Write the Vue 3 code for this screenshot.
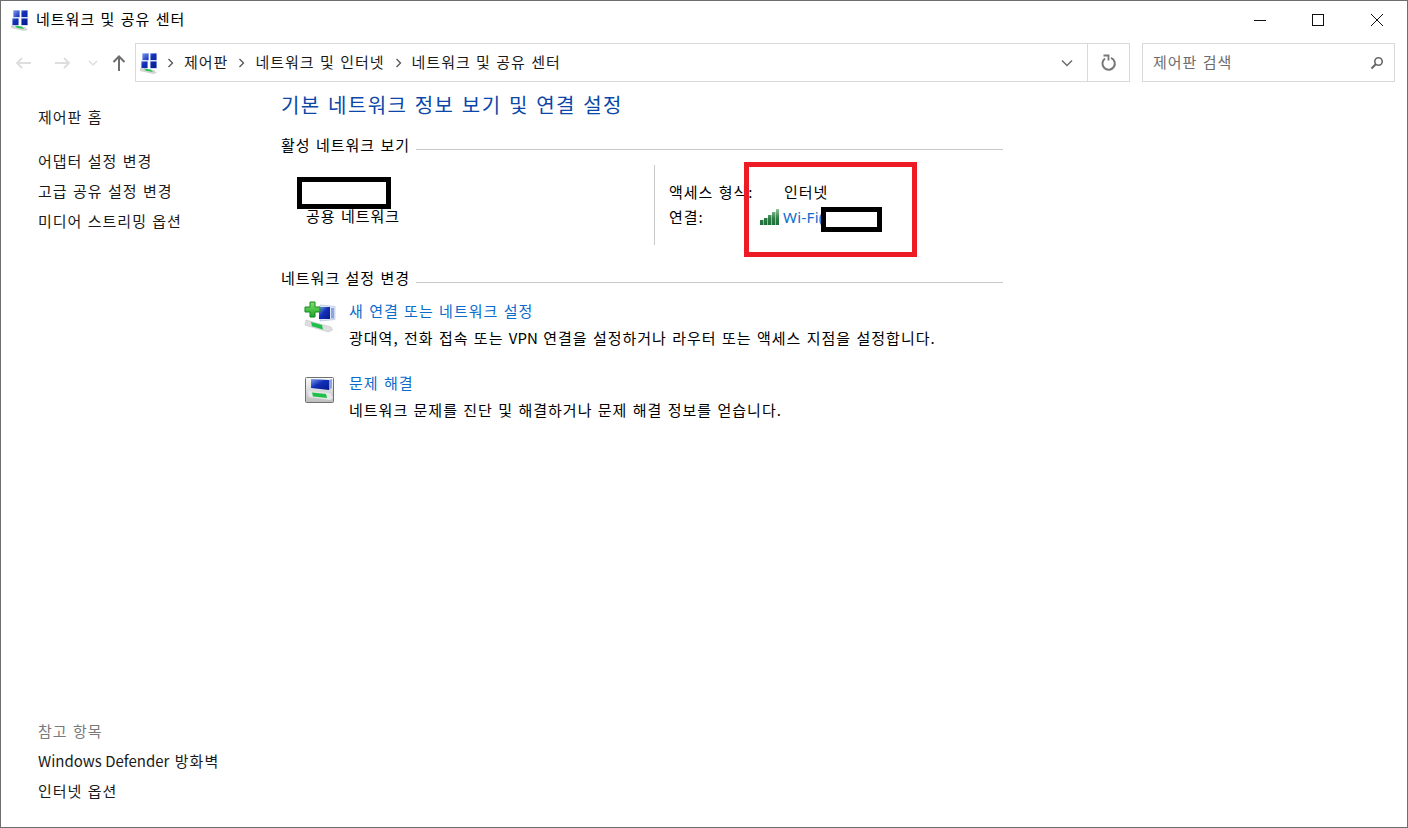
<script setup>
const sideLinks = ['어댑터 설정 변경', '고급 공유 설정 변경', '미디어 스트리밍 옵션']
const crumbs = ['제어판', '네트워크 및 인터넷', '네트워크 및 공유 센터']
</script>

<template>
  <div class="window">
    <svg class="defs" width="0" height="0">
      <defs>
        <linearGradient id="screen" x1="0" y1="0" x2="1" y2="1">
          <stop offset="0" stop-color="#7f9fee" />
          <stop offset=".45" stop-color="#1230b8" />
          <stop offset="1" stop-color="#081a8c" />
        </linearGradient>
        <linearGradient id="plus" x1="0" y1="0" x2="0" y2="1">
          <stop offset="0" stop-color="#7fe06a" />
          <stop offset="1" stop-color="#1fa52c" />
        </linearGradient>
        <linearGradient id="bar" gradientUnits="userSpaceOnUse" x1="0" y1="0" x2="0" y2="16">
          <stop offset="0" stop-color="#8fc49a" />
          <stop offset=".6" stop-color="#2c7d44" />
          <stop offset="1" stop-color="#1c6e38" />
        </linearGradient>
        <linearGradient id="frame" x1="0" y1="0" x2="0" y2="1">
          <stop offset="0" stop-color="#fafafa" />
          <stop offset="1" stop-color="#bdbdbd" />
        </linearGradient>
      </defs>
    </svg>

    <header class="titlebar">
      <svg class="app-icon" width="20" height="22" viewBox="0 0 20 22">
        <path d="M3 1h7v8H3zM11 1h7v8h-7zM2 9h7v8H2zM11 9h7v8h-7z" fill="#d6e1f8" />
        <path d="M3.500 1.500h6v6.500h-6zM11.500 1.500h6v6.500h-6zM2.500 9.500h6V16h-6zM11.500 9.500h6V16h-6z" fill="url(#screen)" />
        <path d="M1 16l14 2 3 3-4 1L1 19z" fill="#d2d4d6" />
        <path d="M5 16.500l7 1.200 2 2.300-7-1.300z" fill="#23c24a" />
      </svg>
      <span class="title">네트워크 및 공유 센터</span>
      <div class="controls">
        <svg width="58" height="38" viewBox="0 0 58 38"><path d="M22 19.500h12" stroke="#111" /></svg>
        <svg width="58" height="38" viewBox="0 0 58 38"><rect x="22.500" y="13.500" width="11" height="11" fill="none" stroke="#111" /></svg>
        <svg width="58" height="38" viewBox="0 0 58 38"><path d="M23 13l12 12M35 13L23 25" stroke="#111" /></svg>
      </div>
    </header>

    <div class="toolbar">
      <div class="nav">
        <svg width="20" height="16" viewBox="0 0 20 16"><path d="M17 8H3M8 3L3 8l5 5" fill="none" stroke="#dedede" stroke-width="2" /></svg>
        <svg class="nav-fwd" width="20" height="16" viewBox="0 0 20 16"><path d="M3 8h14M12 3l5 5-5 5" fill="none" stroke="#dedede" stroke-width="2" /></svg>
        <svg class="nav-down" width="10" height="8" viewBox="0 0 10 8"><path d="M1 2l4 4 4-4" fill="none" stroke="#dedede" stroke-width="1.500" /></svg>
        <svg class="nav-up" width="14" height="18" viewBox="0 0 14 18"><path d="M7 17V3M1.500 8L7 2.500 12.500 8" fill="none" stroke="#6e6e6e" stroke-width="2" /></svg>
      </div>
      <div class="address">
        <svg class="addr-icon" width="20" height="22" viewBox="0 0 20 22">
          <path d="M3 1h7v8H3zM11 1h7v8h-7zM2 9h7v8H2zM11 9h7v8h-7z" fill="#d6e1f8" />
          <path d="M3.500 1.500h6v6.500h-6zM11.500 1.500h6v6.500h-6zM2.500 9.500h6V16h-6zM11.500 9.500h6V16h-6z" fill="url(#screen)" />
          <path d="M1 16l14 2 3 3-4 1L1 19z" fill="#d2d4d6" />
          <path d="M5 16.500l7 1.200 2 2.300-7-1.300z" fill="#23c24a" />
        </svg>
        <template v-for="c in crumbs" :key="c">
          <svg class="chev" width="7" height="10" viewBox="0 0 7 10"><path d="M1.500 1l4 4-4 4" fill="none" stroke="#555" stroke-width="1.300" /></svg>
          <span class="crumb">{{ c }}</span>
        </template>
        <svg class="drop" width="12" height="8" viewBox="0 0 12 8"><path d="M1 1.500l5 5 5-5" fill="none" stroke="#6d6d6d" stroke-width="1.500" /></svg>
        <div class="refresh">
          <svg width="16" height="18" viewBox="0 0 16 18"><path d="M10 3.800A6.200 6.200 0 1 1 4 4.500" fill="none" stroke="#777" stroke-width="2" /><path d="M2.500 1.500h5v5" fill="none" stroke="#777" stroke-width="1.800" /></svg>
        </div>
      </div>
      <div class="search">
        <span>제어판 검색</span>
        <svg width="14" height="14" viewBox="0 0 14 14"><circle cx="8.500" cy="5.500" r="3.700" fill="none" stroke="#666" stroke-width="1.600" /><path d="M6 8l-4.500 4.500" stroke="#666" stroke-width="2" /></svg>
      </div>
    </div>

    <div class="body">
      <aside class="side">
        <div class="side-top">
          <a class="side-home">제어판 홈</a>
          <a v-for="l in sideLinks" :key="l" class="side-link">{{ l }}</a>
        </div>
        <div class="side-bottom">
          <span class="see-also">참고 항목</span>
          <a class="side-link"><span class="latin">Windows Defender</span> 방화벽</a>
          <a class="side-link">인터넷 옵션</a>
        </div>
      </aside>

      <main class="main">
        <h1>기본 네트워크 정보 보기 및 연결 설정</h1>

        <div class="section-head first"><span>활성 네트워크 보기</span><i></i></div>
        <div class="active">
          <div class="net-name">
            <div class="name-blank"></div>
            <span>공용 네트워크</span>
          </div>
          <div class="net-info">
            <div class="row"><span class="key">액세스 형식:</span><span class="val">인터넷</span></div>
            <div class="row">
              <span class="key">연결:</span>
              <svg class="wifi" width="19" height="16" viewBox="0 0 19 16">
                <path d="M0 11h3.500v5H0zM4 9h3.500v7H4zM8 6h3.500v10H8zM12 3h3.500v13H12zM16 0h3v16h-3z" fill="url(#bar)" />
              </svg>
              <a class="wifi-link">Wi-Fi(</a>
            </div>
            <div class="wifi-blank"></div>
            <div class="red-box"></div>
          </div>
        </div>

        <div class="section-head second"><span>네트워크 설정 변경</span><i></i></div>

        <div class="task">
          <svg class="task-icon" width="32" height="32" viewBox="0 0 32 32">
            <path d="M16 4l15 1.500v13L16 20z" fill="#dfe7f7" stroke="#a8b8d8" stroke-width=".6" />
            <path d="M15 6h11v12H15z" fill="url(#screen)" />
            <path d="M27 7h3v10.500h-3z" fill="#8ba4e4" />
            <path d="M2 19l25 7 1.500 3-4 2L1 24z" fill="#dcdee0" stroke="#b8babc" stroke-width=".5" />
            <path d="M7 21l11 3 1 4.500-11-3.200z" fill="#1fc04a" />
            <path d="M6 1h5v5h5v5h-5v5H6v-5H1V6h5z" fill="url(#plus)" stroke="#158a22" />
          </svg>
          <div class="task-text">
            <a>새 연결 또는 네트워크 설정</a>
            <p>광대역, 전화 접속 또는 <span class="latin">VPN</span> 연결을 설정하거나 라우터 또는 액세스 지점을 설정합니다.</p>
          </div>
        </div>

        <div class="task">
          <svg class="task-icon" width="32" height="32" viewBox="0 0 32 32">
            <rect x="1.500" y="4.500" width="28" height="25" rx="1" fill="url(#frame)" stroke="#707070" />
            <path d="M7 6l18 1v10L7 15z" fill="url(#screen)" />
            <path d="M25 7l3-1v9l-3 2z" fill="#8ba4e4" />
            <path d="M4 18l22 2 3 5-3 2-21-3z" fill="#e6e7e8" />
            <path d="M8 19.500l14 1.500 1 4-14-1.500z" fill="#1fc04a" />
          </svg>
          <div class="task-text">
            <a>문제 해결</a>
            <p>네트워크 문제를 진단 및 해결하거나 문제 해결 정보를 얻습니다.</p>
          </div>
        </div>
      </main>
    </div>
  </div>
</template>

<style scoped>
.window {
  box-sizing: border-box;
  width: 1408px;
  height: 828px;
  border: 1px solid #6e6e6e;
  background: #fff;
  display: flex;
  flex-direction: column;
  overflow: hidden;
  color: #000;
  font-family: "Noto Sans CJK KR", "Noto Sans", sans-serif;
  font-size: 15px;
  letter-spacing: 1px;
  word-spacing: 1px;
}
.defs { position: absolute; }
.latin { letter-spacing: 0; word-spacing: 0; }
.titlebar {
  height: 37px;
  flex: none;
  display: flex;
  align-items: center;
  padding-left: 9px;
}
.app-icon { margin-right: 6px; }
.title { line-height: 37px; margin-bottom: 2px; }
.controls {
  margin-left: auto;
  display: flex;
  margin-right: 1px;
}
.controls svg { display: block; }
.toolbar {
  height: 44px;
  flex: none;
  display: flex;
  align-items: center;
  padding-top: 5px;
  box-sizing: border-box;
}
.nav {
  width: 134px;
  flex: none;
  box-sizing: border-box;
  padding-left: 13px;
  display: flex;
  align-items: center;
}
.nav-fwd { margin-left: 18px; }
.nav-down { margin-left: 16px; }
.nav-up { margin-left: 14px; }
.address {
  width: 995px;
  height: 39px;
  flex: none;
  box-sizing: border-box;
  border: 1px solid #d9d9d9;
  display: flex;
  align-items: center;
  padding-left: 3px;
}
.addr-icon { margin-right: 8px; }
.chev { margin-right: 10px; }
.crumb { margin-right: 10px; color: #1a1a1a; margin-bottom: 2px; }
.drop { margin-left: auto; margin-right: 14px; }
.refresh {
  width: 42px;
  height: 37px;
  border-left: 1px solid #d9d9d9;
  display: flex;
  align-items: center;
  justify-content: center;
  box-sizing: border-box;
}
.search {
  width: 253px;
  height: 39px;
  margin-left: 12px;
  box-sizing: border-box;
  border: 1px solid #d9d9d9;
  display: flex;
  align-items: center;
  justify-content: space-between;
  padding: 0 10px;
  color: #6d6d6d;
}
.search span { margin-bottom: 2px; }
.body {
  flex: 1;
  display: flex;
  min-height: 0;
}
.side {
  width: 280px;
  flex: none;
  box-sizing: border-box;
  padding: 20px 0 21px 37px;
  display: flex;
  flex-direction: column;
  justify-content: space-between;
}
.side-top, .side-bottom {
  display: flex;
  flex-direction: column;
}
.side-home { line-height: 30px; margin-bottom: 14px; color: #1a1a1a; }
.side-link { line-height: 30px; color: #1a1a1a; }
.see-also { line-height: 30px; color: #7a7a7a; }
.main {
  flex: 1;
  min-width: 0;
  padding-top: 5px;
}
h1 {
  margin: 0;
  font-size: 20px;
  font-weight: 400;
  line-height: 36px;
  letter-spacing: 1.400px;
  word-spacing: 1.600px;
  color: #0b46a8;
}
.section-head {
  width: 722px;
  display: flex;
  align-items: center;
  gap: 6px;
  line-height: 22px;
  margin-top: 11px;
}
.section-head i {
  flex: 1;
  height: 1px;
  background: #c8c8c8;
}
.section-head.first i { margin-top: 8px; }
.section-head.second i { margin-top: 8px; }
.section-head.second {
  margin-top: 22px;
  margin-bottom: 9px;
}
.active {
  width: 722px;
  display: flex;
  margin-top: 9px;
}
.net-name {
  width: 373px;
  flex: none;
  padding: 12px 0 0 16px;
  box-sizing: border-box;
}
.name-blank {
  width: 94px;
  height: 32px;
  box-sizing: border-box;
  border: 5px solid #000;
}
.net-name span {
  display: block;
  margin: -4px 0 0 9px;
  line-height: 22px;
}
.net-info {
  position: relative;
  height: 80px;
  box-sizing: border-box;
  border-left: 1px solid #c8c8c8;
  padding: 14px 0 0 14px;
  flex: 1;
}
.row {
  display: flex;
  align-items: center;
  height: 25px;
}
.key { width: 115px; flex: none; }
.row .key + .wifi { margin-left: -24px; margin-right: 4px; }
.wifi-link {
  color: #0a6ccc;
  font-family: "Noto Sans", sans-serif;
  letter-spacing: .3px;
}
.wifi-blank {
  position: absolute;
  left: 166px;
  top: 42px;
  width: 61px;
  height: 25px;
  box-sizing: border-box;
  border: 5px solid #000;
  background: #fff;
}
.red-box {
  position: absolute;
  left: 89px;
  top: -3px;
  width: 173px;
  height: 95px;
  box-sizing: border-box;
  border: 5px solid #ed1c24;
}
.task {
  display: flex;
  margin: 0 0 0 23px;
  gap: 13px;
  height: 72px;
}
.task-icon { flex: none; margin-top: 3px; }
.task-text a {
  display: block;
  line-height: 26px;
  color: #0a6ccc;
}
.task-text p {
  margin: 0;
  line-height: 28px;
}
</style>

<style>
html, body { margin: 0; overflow: hidden; background: #fff; }
</style>
